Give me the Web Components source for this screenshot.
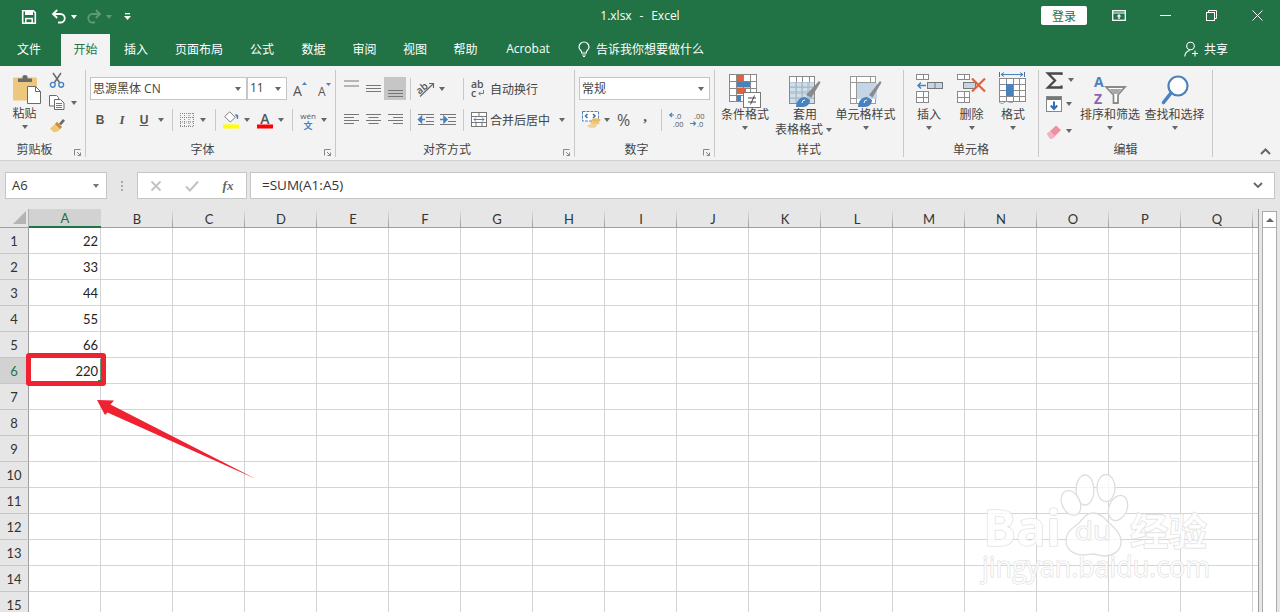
<!DOCTYPE html>
<html lang="zh"><head><meta charset="utf-8"><title>1.xlsx - Excel</title>
<style>html,body{margin:0;padding:0;background:#e6e6e6}</style></head>
<body>
<x-app></x-app>
<script>
const CJK='"Open Sans","Noto Sans CJK SC",sans-serif';
const G='#6a6a6a',B='#4a82bd',O='#eec77f',R='#e2613f';
const line=(x1,y1,x2,y2,c=G,w=1)=>`<line x1="${x1}" y1="${y1}" x2="${x2}" y2="${y2}" stroke="${c}" stroke-width="${w}"/>`;
const svg=(w,h,b)=>`<svg xmlns="http://www.w3.org/2000/svg" width="${w}" height="${h}" viewBox="0 0 ${w} ${h}" style="display:block;overflow:visible">${b}</svg>`;
const lines=(w,ys,l)=>ys.map((y,i)=>line(l?l[i][0]:0,y,l?l[i][1]:w,y,'#777')).join('');
const gridIcon=(x,y,w,h,cols,rows,c='#8a8a8a')=>{let s=`<rect x="${x+.5}" y="${y+.5}" width="${w-1}" height="${h-1}" fill="#fff" stroke="${c}"/>`;
 for(let i=1;i<cols;i++){const X=x+Math.round(i*w/cols)+.5;s+=line(X,y,X,y+h,c)}
 for(let i=1;i<rows;i++){const Y=y+Math.round(i*h/rows)+.5;s+=line(x,Y,x+w,Y,c)}return s};
const ICONS={
 save:svg(16,16,`<path d="M1.7 1.7h10.6l2 2v10.6H1.7z" fill="none" stroke="#fff" stroke-width="1.6"/><rect x="4" y="1.5" width="8" height="4.5" fill="#fff"/><rect x="4.8" y="9.6" width="6.4" height="4.4" fill="none" stroke="#fff" stroke-width="1.5"/>`),
 undo:svg(15,15,`<path d="M2 5h7.5a4.2 4.2 0 0 1 0 8.5H7" fill="none" stroke="#fff" stroke-width="1.8"/><path d="M6.2 1L2 5l4.2 4" fill="none" stroke="#fff" stroke-width="1.8"/>`),
 redo:svg(15,15,`<path d="M13 5H5.5a4.2 4.2 0 0 0 0 8.5H8" fill="none" stroke="#5f9a7b" stroke-width="1.8"/><path d="M8.8 1L13 5 8.8 9" fill="none" stroke="#5f9a7b" stroke-width="1.8"/>`),
 custom:svg(7,7,`<rect x="1" y="0" width="5" height="1.3" fill="#fff"/><path d="M0 3h7L3.5 7z" fill="#fff"/>`),
 display:svg(14,11,`<rect x=".7" y=".7" width="12.6" height="9.6" fill="none" stroke="#fff" stroke-width="1.3"/>${line(1,3,13,3,'#fff',1)}<path d="M7 4l2.4 2.4H7.7V9H6.3V6.4H4.6z" fill="#fff"/>`),
 min:svg(11,1,`<rect width="11" height="1" fill="#fff"/>`),
 restore:svg(11,11,`<rect x=".5" y="2.5" width="8" height="8" fill="none" stroke="#fff"/><path d="M2.5 2.5V.5h8v8H8.5" fill="none" stroke="#fff"/>`),
 close:svg(11,11,`<path d="M.5.5l10 10M10.5.5l-10 10" stroke="#fff" fill="none" stroke-width="1"/>`),
 bulb:svg(12,16,`<path d="M3.6 10.5C2 9 1 7.8 1 6a5 5 0 0 1 10 0c0 1.8-1 3-2.6 4.5V12H3.600z" fill="none" stroke="#fff" stroke-width="1.2"/><path d="M4.200 14h3.600M5 15.500h2" stroke="#fff"/>`),
 share:svg(15,16,`<circle cx="6.500" cy="5" r="3.800" fill="none" stroke="#fff" stroke-width="1.1"/><path d="M.7 15.500c.4-3.500 2.500-5.500 5-6" fill="none" stroke="#fff" stroke-width="1.1"/><path d="M11 9.500v6M8 12.500h6" stroke="#fff" stroke-width="1.100"/>`),
 paste:svg(30,30,`<path d="M2 3.500h22a2 2 0 0 1 1 2v21H2a1 1 0 0 1-1-1V4.500a1 1 0 0 1 1-1z" fill="${O}"/><path d="M6 8V4.500h4.500V2.500a2.500 1.500 0 0 1 5 0v2h4.500V8z" fill="${G}"/><path d="M15.500 12.500h8l5 5V29.500H15.500z" fill="#fff" stroke="${G}"/><path d="M23.500 12.500v5h5" fill="none" stroke="${G}"/>`),
 cut:svg(16,16,`<path d="M4 1l6.500 9.500M12 1L5.500 10.500" stroke="${G}" stroke-width="1.500" fill="none"/><circle cx="3.800" cy="12.800" r="2.400" fill="none" stroke="${B}" stroke-width="1.400"/><circle cx="12.200" cy="12.800" r="2.400" fill="none" stroke="${B}" stroke-width="1.400"/>`),
 copy:svg(16,15,`<path d="M.5.500h7l2 2V11H.5z" fill="#fff" stroke="${G}"/><path d="M5.500 4.500h6l3.500 3.500v6.500H5.500z" fill="#fff" stroke="${G}"/>${line(7,8.500,13,8.500,B)}${line(7,10.500,13,10.500,B)}${line(7,12.500,13,12.500,B)}`),
 brush:svg(17,15,`<path d="M10 5.500l4-4.500 2 1.800-4 4.500z" fill="${G}"/><path d="M8 4l5 5-3.500 4L5 14.500 1 10.500 5 7z" fill="${O}"/><path d="M8 4l5 5-1.800 2L6 6z" fill="#c98a3a"/>`),
 borders:svg(14,14,[.5,4.500,9,13.500].map(p=>`<path d="M${p} 0V14M0 ${p}H14" stroke="#888" stroke-dasharray="1 1" fill="none"/>`).join('')),
 atop:svg(15,23,lines(15,[4,9])),
 amid:svg(15,23,lines(15,[8.500,11.500,14.500])),
 abot:svg(15,23,lines(15,[13.500,16.500,19.500])),
 aleft:svg(15,11,lines(15,[.5,3.500,6.500,9.500],[[0,15],[0,10],[0,15],[0,10]])),
 acenter:svg(15,11,lines(15,[.5,3.500,6.500,9.500],[[0,15],[2.500,12.500],[0,15],[2.500,12.500]])),
 aright:svg(15,11,lines(15,[.5,3.500,6.500,9.500],[[0,15],[5,15],[0,15],[5,15]])),
 orient:svg(18,16,`<text x="0" y="11" transform="rotate(-38 5 9)" font-family="Open Sans" font-size="10" font-weight="600" fill="#555">ab</text><path d="M3 15.500L16 3M12 2.500h4.500V7" fill="none" stroke="#666" stroke-width="1.200"/>`),
 wrap:svg(14,17,`<text x="0" y="8" font-family="Open Sans" font-size="10.500" font-weight="600" fill="#555">ab</text><text x="0" y="17" font-family="Open Sans" font-size="10.500" font-weight="600" fill="#555">c</text><path d="M12.500 10v3.500H8M9.500 11.800L7.800 13.500l1.700 1.700" fill="none" stroke="${B}"/>`),
 outdent:svg(16,11,`${lines(16,[.5,10.500])}${line(8,3.500,16,3.500,'#777')}${line(8,7.500,16,7.500,'#777')}<path d="M7 5.500H3M3.500 2.500L.5 5.500l3 3z" stroke="${B}" stroke-width="1.500" fill="${B}"/>`),
 indent:svg(16,11,`${lines(16,[.5,10.500])}${line(8,3.500,16,3.500,'#777')}${line(8,7.500,16,7.500,'#777')}<path d="M0 5.500h4M4 2.500l3 3-3 3z" stroke="${B}" stroke-width="1.500" fill="${B}"/>`),
 merge:svg(16,15,`<rect x=".5" y=".5" width="15" height="14" fill="#fff" stroke="#777"/>${line(0,4.500,16,4.500,'#777')}${line(0,10.500,16,10.500,'#777')}${line(8,0,8,4,'#777')}${line(5,11,5,15,'#777')}${line(11,11,11,15,'#777')}<path d="M3 7.500h10M5 5.500l-2 2 2 2M11 5.500l2 2-2 2" fill="none" stroke="${B}"/>`),
 money:svg(19,17,`<rect x=".5" y=".5" width="16" height="9.500" fill="#fff" stroke="${B}" stroke-dasharray="3 1"/><path d="M5.500 3l-2 2 2 2M11 3l2 2-2 2" fill="none" stroke="#3b6fa8" stroke-width="1.500"/><ellipse cx="14" cy="9" rx="4.500" ry="1.800" fill="#e9b85f"/><ellipse cx="13" cy="12" rx="4.500" ry="1.800" fill="${O}"/><ellipse cx="10" cy="15" rx="4.500" ry="1.800" fill="#f2cf93"/>`),
 inc:svg(16,15,`<text x="6" y="7" font-family="Open Sans" font-size="7.500" fill="#555">.0</text><text x="4" y="15" font-family="Open Sans" font-size="7.500" fill="#555">.00</text><path d="M5 3H1.500M3 1L.8 3 3 5" fill="none" stroke="${B}" stroke-width="1.200"/>`),
 dec:svg(16,15,`<text x="4" y="7" font-family="Open Sans" font-size="7.500" fill="#555">.00</text><text x="7" y="15" font-family="Open Sans" font-size="7.500" fill="#555">.0</text><path d="M0 11.500h5M3.500 9.500l2 2-2 2" fill="none" stroke="${B}" stroke-width="1.200"/>`),
 cond:svg(32,34,`${gridIcon(0,0,28,28,4,4)}<rect x="8" y="1" width="6" height="6" fill="${R}"/><rect x="8" y="7.500" width="13" height="6" fill="${B}"/><rect x="8" y="14" width="9" height="6" fill="${R}"/><rect x="8" y="21" width="4" height="6" fill="${B}"/><rect x="14.500" y="18.500" width="17" height="15" fill="#fff" stroke="#777"/><path d="M19 24h8M19 28h8M25.500 21.500l-4 9" stroke="#444" fill="none"/>`),
 tablestyle:svg(32,34,`${gridIcon(0,2,26,28,4,5)}<rect x="1" y="8" width="24" height="21" fill="#c5d5e8" opacity=".8"/>${[7,13,19].map(x=>line(x,8,x,29,'#9bb')).join('')}${[13,18,24].map(y=>line(1,y,25,y,'#9bb')).join('')}<path d="M17 21L30 7l1.500 1.500-9 15z" fill="#8a8a8a"/><path d="M7 33c0-6 4-10 9-10l5 3c0 4-3 7-7 7z" fill="${B}"/><path d="M13 29a3 3 0 0 1 3-3" stroke="#fff" fill="none"/>`),
 cellstyle:svg(32,34,`<rect x=".5" y="2.500" width="25" height="27" fill="#fff" stroke="#999"/>${line(0,8.500,26,8.500,'#999')}${line(6.500,2,6.500,30,'#999')}${line(20.500,2,20.500,30,'#999')}${line(0,24.500,26,24.500,'#999')}<rect x="7" y="9" width="20" height="16" fill="#c5d5e8"/><path d="M19 21L30 7l1.500 1.500-9 15z" fill="#8a8a8a"/><path d="M8 33c0-6 4-10 9-10l5 3c0 4-3 7-7 7z" fill="${B}"/><path d="M14 29a3 3 0 0 1 3-3" stroke="#fff" fill="none"/>`),
 insert:svg(27,32,`${gridIcon(0,0,13,6,2,1)}${gridIcon(0,17,13,12,2,2)}<rect x="11.500" y="8.500" width="15" height="6" fill="#c5d5e8" stroke="#777"/>${line(19,8,19,15,'#777')}<path d="M10 11.500H2M5 8.500l-3 3 3 3" fill="none" stroke="${B}" stroke-width="1.500"/>`),
 del:svg(30,32,`${gridIcon(0,0,13,6,2,1)}${gridIcon(0,17,13,12,2,2)}<rect x="6.500" y="8.500" width="12" height="6" fill="#c5d5e8" stroke="#777"/><path d="M15 4.500l13 13M28 4.500l-13 13" stroke="${R}" stroke-width="2.200"/>`),
 fmt:svg(28,33,`<path d="M.5 0v5M25.500 0v5" stroke="#4a6f9a"/><path d="M2 2.500h22M5 .5L2 2.500l3 2M21 .5l3 2-3 2" fill="none" stroke="${B}"/>${gridIcon(0,6,27,24,4,4)}<rect x="7" y="12" width="7" height="12" fill="#4a82bd"/><path d="M0 30c2 2 4 2 6 0s5 2 8 0" fill="none" stroke="#999"/>`),
 sigma:svg(17,17,`<path d="M15.500 3V1.500H2L9 8.500 2 15.500H15.500V13.500" fill="none" stroke="#484848" stroke-width="2.300"/>`),
 fill:svg(16,16,`<rect x=".5" y=".5" width="15" height="15" fill="#fff" stroke="#888"/><rect x="1" y="1" width="14" height="3" fill="#777"/><path d="M8 5.500v7M4.800 9.500L8 13l3.200-3.500" fill="none" stroke="#2f6fb2" stroke-width="2"/>`),
 eraser:svg(16,15,`<path d="M1 10L10 1.500l5 4.500-8.500 8.500H4z" fill="#ee8fa3"/><path d="M1 10l3 4.500h2.500L9 12 4.500 7z" fill="#f3b4c1"/>`),
 sort:svg(32,30,`<text x="0" y="11" font-family="Open Sans" font-size="14" font-weight="700" fill="${B}">A</text><text x="0" y="28" font-family="Open Sans" font-size="14" font-weight="700" fill="#8e64b8">Z</text><path d="M12 11h19l-7 8v8h-4.500v-8z" fill="#fff" stroke="#8a8a8a" stroke-width="1.800"/><path d="M15 13h13l-4.500 5h-4z" fill="#a8a8a8"/>`),
 find:svg(28,30,`<circle cx="17" cy="11" r="9.500" fill="#fff" stroke="${B}" stroke-width="2.200"/><path d="M10 18L2.500 27.500" stroke="${B}" stroke-width="3.600" stroke-linecap="round"/>`),
};

class XIcon extends HTMLElement{constructor(){super();this.attachShadow({mode:'open'})}
 connectedCallback(){this.shadowRoot.innerHTML=`<style>:host{display:block;line-height:0}</style>${ICONS[this.getAttribute('name')]||''}`}}
customElements.define('x-icon',XIcon);

class XCaret extends HTMLElement{constructor(){super();this.attachShadow({mode:'open'})}
 connectedCallback(){const c=this.getAttribute('color')||'#666';this.shadowRoot.innerHTML=`<style>:host{display:flex;align-items:center;justify-content:center;flex:none}i{display:block;width:0;height:0;border:3.5px solid transparent;border-top:4px solid ${c};border-bottom:0}</style><i></i>`}}
customElements.define('x-caret',XCaret);

class XTool extends HTMLElement{constructor(){super();this.attachShadow({mode:'open'})}
 connectedCallback(){const a=n=>this.getAttribute(n);const w=a('w')||22,cw=a('cw'),lab=a('label');
 this.shadowRoot.innerHTML=`<style>:host{display:flex;align-items:center;height:23px;flex:none;color:#555}
 .b{width:${w}px;height:100%;display:flex;align-items:center;justify-content:center;flex:none;background:${a('bg')||'none'};box-sizing:border-box}
 .l{font:12px ${CJK};color:#444;white-space:nowrap;padding-left:${a('lp')||0}px}</style>
 <span class="b">${a('icon')?`<x-icon name="${a('icon')}"></x-icon>`:'<slot></slot>'}</span>${lab?`<span class="l" style="width:${a('lw')||'auto'}px">${lab}</span>`:''}${cw?`<x-caret style="width:${cw}px;height:100%"></x-caret>`:''}`}}
customElements.define('x-tool',XTool);

class XSep extends HTMLElement{constructor(){super();this.attachShadow({mode:'open'})}
 connectedCallback(){const w=this.getAttribute('w')||10;this.shadowRoot.innerHTML=`<style>:host{display:flex;justify-content:center;width:${w}px;height:22px;flex:none}i{width:1px;background:#c8c8c8}</style><i></i>`}}
customElements.define('x-sep',XSep);

class XCombo extends HTMLElement{constructor(){super();this.attachShadow({mode:'open'})}
 connectedCallback(){const w=this.getAttribute('w');this.shadowRoot.innerHTML=`<style>:host{display:flex;align-items:center;box-sizing:border-box;width:${w}px;height:23px;flex:none;background:#fff;border:1px solid #c6c6c6;font:12px ${CJK};color:#444;padding:0 4px 0 2px}
 span{flex:1;white-space:nowrap;overflow:visible;padding-bottom:2px}x-caret{width:9px}</style><span><slot></slot></span><x-caret></x-caret>`}}
customElements.define('x-combo',XCombo);

class XLarge extends HTMLElement{constructor(){super();this.attachShadow({mode:'open'})}
 connectedCallback(){const a=n=>this.getAttribute(n);const w=a('w'),two=a('two');
 this.shadowRoot.innerHTML=`<style>:host{display:flex;flex-direction:column;align-items:center;width:${w}px;flex:none;font:12px/15px ${CJK};color:#444}
 .i{height:${a('ih')||33}px;padding-top:${a('it')||4}px;margin-left:${a('il')||0}px;display:flex;align-items:flex-start;justify-content:center}
 .t{white-space:nowrap;height:15px}.two{display:flex;align-items:center;height:15px;white-space:nowrap}
 x-caret{height:15px;width:100%}.two x-caret{width:12px}</style>
 <div class="i"><x-icon name="${a('icon')}"></x-icon></div><div class="t">${a('label')}</div>
 ${two?`<div class="two">${two}<x-caret></x-caret></div>`:'<x-caret style="margin-top:-2px"></x-caret>'}`}}
customElements.define('x-large',XLarge);

class XGroup extends HTMLElement{constructor(){super();this.attachShadow({mode:'open'})}
 connectedCallback(){const a=n=>this.getAttribute(n);
 this.shadowRoot.innerHTML=`<style>:host{display:flex;flex-direction:column;width:${a('w')}px;flex:none;box-sizing:border-box;border-right:1px solid #c8c8c8;height:87px}
 .c{flex:1;min-height:0;padding-left:${a('pl')||0}px;box-sizing:border-box}
 .f{height:14px;display:flex;align-items:center;font:12px/14px ${CJK};color:#444}
 .f span{flex:1;text-align:center;white-space:nowrap}
 .k{width:16px;height:14px;display:flex;align-items:center;justify-content:flex-start;padding-top:5px;box-sizing:border-box;padding-left:5px}</style>
 <div class="c"><slot></slot></div><div class="f"><span>${a('label')}</span>${a('launch')!==null?`<div class="k"><svg width="7" height="7" viewBox="0 0 7 7"><path d="M.5 6.500V.5h6M3 3l3.500 3.500M6.500 3.500v3h-3" fill="none" stroke="#888"/></svg></div>`:''}</div>`}}
customElements.define('x-group',XGroup);

class XRows extends HTMLElement{constructor(){super();this.attachShadow({mode:'open'})}
 connectedCallback(){this.shadowRoot.innerHTML=`<style>:host{display:flex;flex-direction:column;gap:8px;padding-top:7px}</style><slot></slot>`}}
customElements.define('x-rows',XRows);
class XRow extends HTMLElement{constructor(){super();this.attachShadow({mode:'open'})}
 connectedCallback(){this.shadowRoot.innerHTML=`<style>:host{display:flex;align-items:center;height:23px}</style><slot></slot>`}}
customElements.define('x-row',XRow);

class XTitlebar extends HTMLElement{constructor(){super();this.attachShadow({mode:'open'})}
 connectedCallback(){this.shadowRoot.innerHTML=`<style>
 :host{display:grid;grid-template-columns:1fr auto 1fr;align-items:center;height:33px;background:#217346;color:#fff;font:12px ${CJK}}
 .l,.r{display:flex;align-items:center;height:100%}
 .l{padding-left:21px}.r{justify-content:flex-end}
 .t{white-space:pre;padding-bottom:3px;word-spacing:.8px}
 .login{width:46px;height:19px;background:#fff;color:#217346;border-radius:2px;display:flex;align-items:center;justify-content:center;margin-right:9px;margin-bottom:2px}
 .w{width:46px;height:33px;display:flex;align-items:center;justify-content:center;padding-bottom:3px;box-sizing:border-box}
 </style>
 <div class="l"><x-icon name="save"></x-icon><span style="width:14px"></span><x-icon name="undo"></x-icon><x-caret color="#fff" style="width:15px"></x-caret><span style="width:6px"></span><x-icon name="redo"></x-icon><x-caret color="#5f9a7b" style="width:14px"></x-caret><span style="width:8px"></span><x-icon name="custom"></x-icon></div>
 <div class="t">1.xlsx  -  Excel</div>
 <div class="r"><div class="login">登录</div><div class="w"><x-icon name="display"></x-icon></div><div class="w"><x-icon name="min"></x-icon></div><div class="w"><x-icon name="restore"></x-icon></div><div class="w"><x-icon name="close"></x-icon></div></div>`}}
customElements.define('x-titlebar',XTitlebar);

class XTabs extends HTMLElement{constructor(){super();this.attachShadow({mode:'open'})}
 connectedCallback(){const tabs=[['文件',58],['开始',52,1],['插入',52],['页面布局',74],['公式',52],['数据',51],['审阅',51],['视图',50],['帮助',51],['Acrobat',74]];
 this.shadowRoot.innerHTML=`<style>:host{display:flex;height:33px;background:#217346;color:#fff;font:12px ${CJK}}
 .t{display:flex;align-items:center;justify-content:center;margin-top:1px;flex:none;padding-bottom:3px;box-sizing:border-box}
 .a{background:#f3f3f3;color:#217346}
 .tell{display:flex;align-items:center;gap:6px;margin-left:13px;padding-bottom:2px}
 .sh{margin-left:auto;display:flex;align-items:center;gap:5px;padding-right:52px;padding-bottom:2px}</style>
 ${tabs.map(([t,w,a])=>`<div class="t${a?' a':''}" style="width:${w}px;${a?'width:49px;margin-left:3px':''}">${t}</div>`).join('')}
 <div class="tell"><x-icon name="bulb"></x-icon><span>告诉我你想要做什么</span></div>
 <div class="sh"><x-icon name="share"></x-icon><span>共享</span></div>`}}
customElements.define('x-tabs',XTabs);

class XRibbon extends HTMLElement{constructor(){super();this.attachShadow({mode:'open'})}
 connectedCallback(){this.shadowRoot.innerHTML=`<style>
 :host{display:flex;height:95px;box-sizing:border-box;background:#f3f3f3;border-bottom:1px solid #d0d0d0;padding-top:4px;position:relative}
 svg{overflow:visible}
 .col{display:flex;flex-direction:column;margin-top:-2px}
 .h{display:flex}
 .g{font:700 12px "Liberation Sans",sans-serif;color:#555}
 .col x-tool{height:24px}
 .col.clip x-tool{height:23px}
 .az{position:absolute;right:9px;bottom:5px}
 .tight{line-height:13px}
 </style>
 <x-group w="86" label="剪贴板" launch>
  <div class="h">
   <x-large w="49" icon="paste" it="4" ih="32" il="5" label="粘贴"></x-large>
   <div class="col clip"><x-tool w="16" icon="cut"></x-tool><x-tool w="16" icon="copy" cw="17"></x-tool><x-tool w="16" icon="brush"></x-tool></div>
  </div>
 </x-group>
 <x-group w="250" label="字体" launch pl="4">
  <x-rows>
   <x-row><x-combo w="157">思源黑体 CN</x-combo><x-combo w="40">11</x-combo>
    <x-tool w="20" style="margin-left:4px"><svg width="16" height="16" viewBox="0 0 16 16"><text x="0" y="15" font-family="Open Sans" font-size="14" fill="#555">A</text><path d="M9 4l2.500-3L14 4z" fill="${B}"/></svg></x-tool>
    <x-tool w="22" style="margin-left:3px"><svg width="16" height="16" viewBox="0 0 16 16"><text x="1" y="15" font-family="Open Sans" font-size="12" fill="#555">A</text><path d="M9 2h5l-2.500 3z" fill="${B}"/></svg></x-tool>
   </x-row>
   <x-row style="margin-left:-1px">
    <x-tool w="22"><span class="g">B</span></x-tool>
    <x-tool w="22"><span style="font:italic 700 13px 'Liberation Serif',serif;color:#555">I</span></x-tool>
    <x-tool w="22" cw="12"><span style="font:700 12px 'Liberation Sans',sans-serif;color:#555;text-decoration:underline">U</span></x-tool>
    <x-sep w="10"></x-sep>
    <x-tool w="20" cw="12" icon="borders"></x-tool>
    <x-sep w="12"></x-sep>
    <x-tool w="20" cw="12"><svg width="18" height="18" viewBox="0 0 18 18"><g transform="translate(1 0) scale(.85)"><path d="M8 1l6.500 6.500L8.500 13 2 6.500z" fill="#fff" stroke="${G}"/><path d="M14.500 4c3-.5 3.500 1 3.500 3s-.5 2.500-1 2.500-1-1-1-2c0-1-.5-1.500-1.500-1.500z" fill="${B}"/></g><rect x="1" y="13.500" width="16" height="4" fill="#ffff00"/></svg></x-tool>
    <x-tool w="24" cw="8"><svg width="16" height="18" viewBox="0 0 16 18"><text x="8" y="12.500" text-anchor="middle" font-family="Open Sans" font-weight="600" font-size="14" fill="#555">A</text><rect x="0" y="13.500" width="16" height="4" fill="#ff0000"/></svg></x-tool>
    <x-sep w="14"></x-sep>
    <x-tool w="18" cw="14"><svg width="18" height="18" viewBox="0 0 18 18"><text x="9" y="7.500" text-anchor="middle" font-family="Open Sans" font-size="8" fill="#555">wén</text><text x="9" y="17.500" text-anchor="middle" font-family="Noto Sans CJK SC" font-weight="700" font-size="9" fill="${B}">文</text></svg></x-tool>
   </x-row>
  </x-rows>
 </x-group>
 <x-group w="239" label="对齐方式" launch pl="4">
  <x-rows>
   <x-row><x-tool icon="atop"></x-tool><x-tool icon="amid"></x-tool><x-tool icon="abot" bg="#c6c6c6"></x-tool><x-sep w="9"></x-sep><x-tool icon="orient" cw="10"></x-tool><x-sep w="10" style="margin-left:11px"></x-sep><x-tool w="20" icon="wrap" label="自动换行" lp="2"></x-tool></x-row>
   <x-row><x-tool icon="aleft"></x-tool><x-tool icon="acenter"></x-tool><x-tool icon="aright"></x-tool><x-sep w="9"></x-sep><x-tool icon="outdent"></x-tool><x-tool icon="indent"></x-tool><x-sep w="9"></x-sep><x-tool w="22" icon="merge" label="合并后居中" lw="60" cw="24"></x-tool></x-row>
  </x-rows>
 </x-group>
 <x-group w="140" label="数字" launch pl="4">
  <x-rows>
   <x-row><x-combo w="131">常规</x-combo></x-row>
   <x-row><x-tool w="24" cw="8" icon="money"></x-tool><x-tool w="25"><span style="font:16px 'Open Sans',sans-serif;color:#555">%</span></x-tool><x-tool w="18"><span style="font:700 15px 'Liberation Serif',serif;color:#555;margin-top:-6px">,</span></x-tool><x-sep w="14"></x-sep><x-tool w="17" icon="inc"></x-tool><x-tool w="26" icon="dec"></x-tool></x-row>
  </x-rows>
 </x-group>
 <x-group w="189" label="样式">
  <div class="h"><x-large w="60" icon="cond" label="条件格式"></x-large><x-large w="60" icon="tablestyle" label="套用" two="表格格式"></x-large><x-large w="61" icon="cellstyle" label="单元格样式"></x-large></div>
 </x-group>
 <x-group w="135" label="单元格" pl="4">
  <div class="h"><x-large w="42" icon="insert" label="插入"></x-large><x-large w="43" icon="del" label="删除"></x-large><x-large w="40" icon="fmt" it="2" ih="35" label="格式"></x-large></div>
 </x-group>
 <x-group w="174" label="编辑">
  <div class="h">
   <div class="col" style="padding-left:6px;width:33px"><x-tool w="18" cw="15" icon="sigma"></x-tool><x-tool w="18" cw="12" icon="fill"></x-tool><x-tool w="18" cw="12" icon="eraser" style="margin-top:3px"></x-tool></div>
   <x-large w="64" icon="sort" it="6" ih="31" label="排序和筛选"></x-large><x-large w="65" icon="find" it="5" ih="32" label="查找和选择"></x-large>
  </div>
 </x-group>
 <svg class="az" width="11" height="7" viewBox="0 0 11 7"><path d="M1 6l4.500-4.500L10 6" fill="none" stroke="#666" stroke-width="2"/></svg>`}}
customElements.define('x-ribbon',XRibbon);

class XFormula extends HTMLElement{constructor(){super();this.attachShadow({mode:'open'})}
 connectedCallback(){this.shadowRoot.innerHTML=`<style>
 :host{display:flex;align-items:flex-start;height:48px;box-sizing:border-box;padding:11px 5px 0 5px;background:#e6e6e6;font:13.5px "Open Sans",sans-serif;color:#333}
 .b{box-sizing:border-box;height:27px;background:#fff;border:1px solid #c6c6c6;display:flex;align-items:center}
 .name{width:102px;padding:0 6px;font-size:13px}.name span{flex:1;padding-bottom:2px}
 .dots{width:30px;display:flex;flex-direction:column;align-items:center;gap:2px;height:27px;justify-content:center}.dots i{width:2px;height:2px;background:#aaa}
 .btns{width:110px}.btns span{flex:1;display:flex;justify-content:center}
 .f{flex:1;margin-left:3px;padding:0 11px}.f span{flex:1;padding-bottom:2px}
 </style>
 <div class="b name"><span>A6</span><x-caret color="#777" style="width:9px"></x-caret></div>
 <div class="dots"><i></i><i></i><i></i></div>
 <div class="b btns"><span><svg width="12" height="12" viewBox="0 0 12 12"><path d="M1.500 1.500l9 9M10.500 1.500l-9 9" stroke="#c2c2c2" stroke-width="1.800"/></svg></span><span><svg width="14" height="12" viewBox="0 0 14 12"><path d="M1 6.500l4 4L13 1.500" fill="none" stroke="#c2c2c2" stroke-width="2"/></svg></span><span style="font:italic 700 13px 'Liberation Serif',serif;color:#666">fx</span></div>
 <div class="b f"><span>=SUM(A1:A5)</span><svg width="10" height="7" viewBox="0 0 10 7"><path d="M1 1l4 4 4-4" fill="none" stroke="#666" stroke-width="1.800"/></svg></div>`}}
customElements.define('x-formula',XFormula);

class XSheet extends HTMLElement{constructor(){super();this.attachShadow({mode:'open'})}
 connectedCallback(){
 const cols='ABCDEFGHIJKLMNOPQ'.split(''),vals={1:22,2:33,3:44,4:55,5:66,6:220};
 let h=`<div class="corner"><svg width="13" height="13" viewBox="0 0 13 13"><path d="M13 0V13H0z" fill="#b4b4b4"/></svg></div>`;
 cols.forEach((c,i)=>h+=`<div class="ch${i==0?' on':''}">${c}</div>`);h+=`<div class="cx"></div>`;
 for(let r=1;r<=15;r++){h+=`<div class="rh${r==6?' on':''}">${r}</div>`;
  cols.forEach((c,i)=>h+=`<div class="c">${i==0&&vals[r]?vals[r]:''}</div>`);h+=`<div class="e"></div>`}
 this.shadowRoot.innerHTML=`<style>
 :host{display:flex;flex:1;min-height:0;background:#e6e6e6;font:13px Lato,sans-serif;color:#222;position:relative;overflow:hidden}
 .g{display:grid;grid-template-columns:29px repeat(17,72px) 5px;grid-auto-rows:26px;grid-template-rows:19px;background:#fff;flex:none;border-right:1px solid #9e9e9e;align-self:flex-start}
 .corner{background:#e6e6e6;display:flex;justify-content:flex-end;align-items:flex-end;padding:0 2px 3px 0;box-sizing:border-box;border-right:1px solid #b0b0b0;border-bottom:1px solid #9e9e9e}
 .ch{background:#e6e6e6 linear-gradient(#e6e6e6,#9e9e9e) right/1px 100% no-repeat;border-bottom:1px solid #9e9e9e;display:flex;align-items:center;justify-content:center;box-sizing:border-box;color:#333;padding-top:1px}
 .ch.on{background:#d2d2d2;border-bottom:2px solid #217346;color:#217346}
 .cx{background:#e6e6e6;border-bottom:1px solid #9e9e9e}
 .rh{background:#e6e6e6;border-right:1px solid #9e9e9e;border-bottom:1px solid #c6c6c6;display:flex;align-items:center;justify-content:center;box-sizing:border-box;color:#333}
 .rh.on{background:#d2d2d2;color:#217346}
 .c{border-right:1px solid #d4d4d4;border-bottom:1px solid #d4d4d4;box-sizing:border-box;display:flex;align-items:center;justify-content:flex-end;padding:0 2px 0 0;background:#fff}
 .e{border-bottom:1px solid #d4d4d4;box-sizing:border-box}
 .gut{width:3px;flex:none}
 .sb{width:14px;flex:none;box-sizing:content-box;background:#fff;border:1px solid #ababab;border-width:0 1px 0 1px;margin-top:2px;display:flex;flex-direction:column;width:13px}
 .up{height:15px;border:1px solid #ababab;border-width:1px 0;box-sizing:content-box;display:flex;align-items:center;justify-content:center}
 .up i{width:0;height:0;border:4px solid transparent;border-bottom:4px solid #666;border-top:0}
 .ov{position:absolute;left:0;top:0;width:1280px;height:403px;pointer-events:none}
 .red{position:absolute;left:26px;top:144px;width:80px;height:33px;box-sizing:border-box;border:5px solid #ee2230;border-radius:3px}
 .hd{position:absolute;left:98px;top:171px;width:3px;height:3px;background:#217346}
 .cur{position:absolute;left:100px;top:150px;width:1px;height:22px;background:#5d9a78}
 svg.mark{position:absolute;left:970px;top:265px;overflow:visible}
 svg.arrow{position:absolute;left:90px;top:185px}
 </style>
 <div class="g">${h}</div><div class="gut"></div><div class="sb"><div class="up"><i></i></div></div>
 <div class="ov">
  <div class="cur"></div><div class="hd"></div><div class="red"></div>
  <svg class="arrow" width="175" height="100" viewBox="90 185 175 100"><path d="M97 191L114 191.500 110.500 195.500 256 270 107.500 203.500 105 206z" fill="#ee2230"/></svg>
  <svg class="mark" width="250" height="135" viewBox="970 265 250 135">
   <g fill="rgba(255,255,255,.78)" stroke="#dedede" stroke-width="1.300">
    <ellipse cx="1085" cy="281" rx="9" ry="15"/><ellipse cx="1106" cy="279" rx="9" ry="13.500"/>
    <ellipse cx="1071" cy="294" rx="9" ry="13" transform="rotate(-25 1071 294)"/><ellipse cx="1118" cy="299" rx="9" ry="13" transform="rotate(22 1118 299)"/>
    <path d="M1093 304c-6 0-9 4-13 9-4 4-14 8-14 19 0 10 10 14 17 14 4 0 7-1 10-1s7 2 11 2c9 0 17-5 17-14 0-10-8-15-13-20-4-5-8-9-15-9z"/>
   </g>
   <g fill="rgba(255,255,255,.78)" stroke="#dcdcdc" stroke-width="1.100" style="paint-order:stroke">
    <text x="983" y="337" font-family="Open Sans" font-weight="700" font-size="50" textLength="78" lengthAdjust="spacingAndGlyphs">Bai</text>
    <text x="1075" y="331" font-family="Open Sans" font-weight="400" font-size="25" textLength="36" lengthAdjust="spacingAndGlyphs">du</text>
    <text x="1130" y="336" font-family="Noto Sans CJK SC" font-weight="700" font-size="38" textLength="77" lengthAdjust="spacingAndGlyphs">经验</text>
    <text x="982" y="368" font-family="Open Sans" font-size="29" textLength="228" lengthAdjust="spacingAndGlyphs">jingyan.baidu.com</text>
   </g>
  </svg>
 </div>`;
 }}
customElements.define('x-sheet',XSheet);

class XApp extends HTMLElement{constructor(){super();this.attachShadow({mode:'open'})}
 connectedCallback(){this.shadowRoot.innerHTML=`<style>:host{display:flex;flex-direction:column;width:1280px;height:612px;overflow:hidden}</style>
 <x-titlebar></x-titlebar><x-tabs></x-tabs><x-ribbon></x-ribbon><x-formula></x-formula><x-sheet></x-sheet>`}}
customElements.define('x-app',XApp);
</script>
</body></html>
